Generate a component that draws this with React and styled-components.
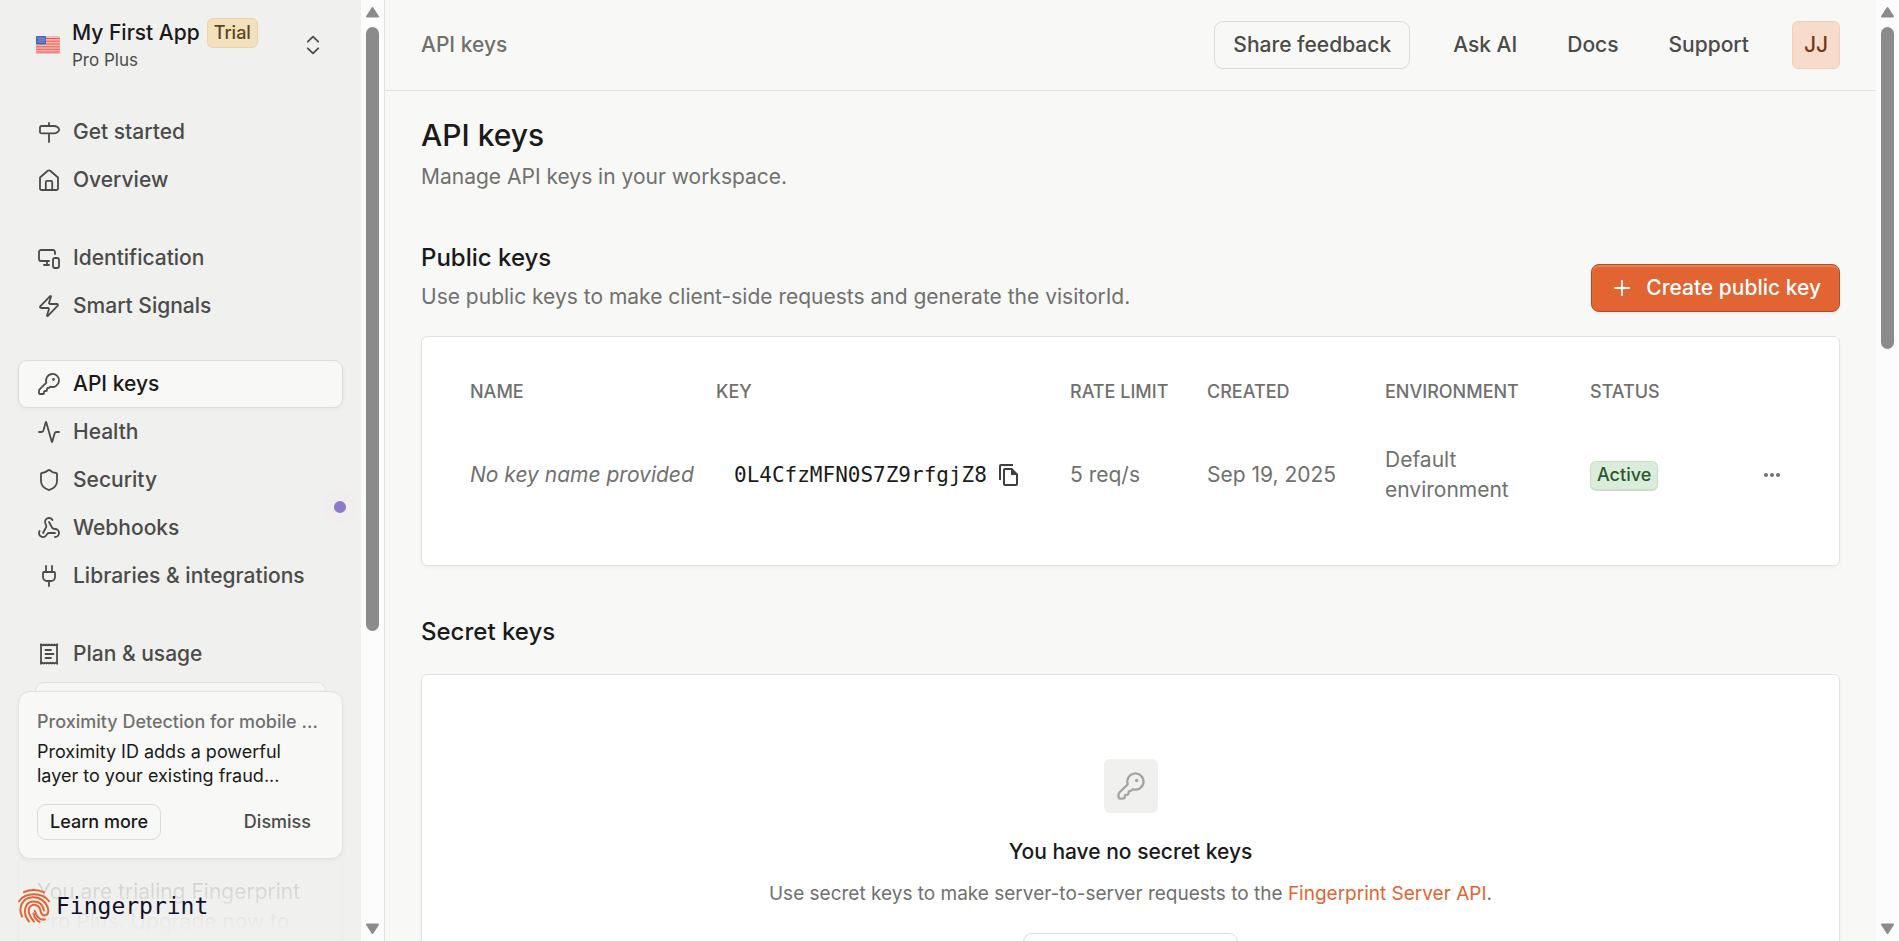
import React from "react";
import styled, { createGlobalStyle } from "styled-components";
import {
  MonitorSmartphone, Zap, KeyRound, Activity, Shield, Webhook, Plug, Plus,
} from "lucide-react";
import { MdOutlineFileCopy } from "react-icons/md";

const Global = createGlobalStyle`
  *, *::before, *::after { box-sizing: border-box; }
  body { margin: 0; background: #f8f8f6; color: #1a1a1a; font: 400 21px/30px Inter, "Liberation Sans", sans-serif; }
  h1, h2, h3, p { margin: 0; }
  button { font: inherit; color: inherit; cursor: pointer; }
  a { text-decoration: none; color: inherit; }
`;

const Shell = styled.div`
  display: flex;
  height: 100vh;
  overflow: hidden;
`;
const Sidebar = styled.aside`
  position: relative;
  flex: 0 0 361px;
  display: flex;
  flex-direction: column;
  background: #f0f0ef;
  overflow: hidden;
`;
const Track = styled.div`
  flex: 0 0 23px;
  display: flex;
  flex-direction: column;
  align-items: center;
  justify-content: space-between;
  padding: 6px 0;
  background: #fcfcfc;
`;
const Thumb = styled.div`
  width: 13px;
  flex: 0 0 ${(p) => p.$size};
  margin: 9px 0 auto;
  border-radius: 7px;
  background: #8b8b8b;
`;
const Arrow = ({ down }) => (
  <svg width="15" height="12" viewBox="0 0 15 12" aria-hidden="true">
    <path
      d={down ? "M2 1.500h11L7.500 10z" : "M2 10.500h11L7.500 2z"}
      fill="#8b8b8b" stroke="#8b8b8b" strokeWidth="2" strokeLinejoin="round"
    />
  </svg>
);
const Scrollbar = ({ size }) => (
  <Track aria-hidden="true">
    <Arrow />
    <Thumb $size={size} />
    <Arrow down />
  </Track>
);

const Switcher = styled.button`
  display: flex;
  align-items: center;
  gap: 12px;
  height: 90px;
  margin: 0 18px;
  padding: 0 18px;
  border: 0;
  background: none;
  text-align: left;
  svg:last-child { margin-left: auto; color: #4b4b4a; }
`;
const AppName = styled.span`
  display: flex;
  align-items: center;
  gap: 7px;
  font-weight: 500;
`;
const AppPlan = styled.span`
  display: block;
  font-size: 17px;
  line-height: 24px;
  color: #4b4b4a;
`;
const Badge = styled.span`
  display: inline-flex;
  align-items: center;
  height: 30px;
  padding: 0 6px;
  border-radius: 6px;
  font-size: 18px;
  font-weight: 500;
  border: 1px solid ${(p) => (p.$green ? "#c5e0c6" : "#efd3a3")};
  border-bottom-width: ${(p) => (p.$green ? "2px" : "1px")};
  background: ${(p) => (p.$green ? "#dcecdb" : "#f3e0bc")};
  color: ${(p) => (p.$green ? "#2b5730" : "#5b4420")};
`;
const Nav = styled.nav`
  display: flex;
  flex-direction: column;
  gap: 30px;
  padding: 18px 18px 0;
`;
const NavGroup = styled.div`
  display: flex;
  flex-direction: column;
`;
const NavLink = styled.a`
  display: flex;
  align-items: center;
  gap: 12px;
  height: 48px;
  padding: 0 18px;
  border: 1px solid ${(p) => (p.$active ? "#dcdcda" : "transparent")};
  border-radius: 9px;
  background: ${(p) => (p.$active ? "#f8f8f6" : "transparent")};
  box-shadow: ${(p) => (p.$active ? "0 2px 4px rgba(0,0,0,.04)" : "none")};
  color: ${(p) => (p.$active ? "#1a1a1a" : "#4b4b4a")};
  font-weight: 500;
  svg { color: #4b4b4a; flex: none; }
`;
const Beacon = styled.span`
  position: absolute;
  right: 4px;
  top: 490px;
  width: 34px;
  height: 34px;
  border: 11px solid #f1eeed;
  border-radius: 50%;
  background: #8b7bcb;
`;
const SideFooter = styled.div`
  position: absolute;
  inset: auto 0 0;
  padding: 0 18px;
  height: 259px;
`;
const CardPeek = styled.div`
  height: 9px;
  margin: 0 17px;
  border: 1px solid #e2e2e0;
  border-bottom: 0;
  border-radius: 9px 9px 0 0;
  background: #f6f6f4;
`;
const Promo = styled.section`
  padding: 18px;
  border: 1px solid #e2e2e0;
  border-radius: 12px;
  background: #f8f8f6;
  box-shadow: 0 2px 4px rgba(0,0,0,.05);
  font-size: 18px;
  line-height: 24px;
`;
const PromoTitle = styled.h3`
  font-size: 18px;
  font-weight: 500;
  line-height: 24px;
  margin-bottom: 6px;
  color: #70706f;
  white-space: nowrap;
  overflow: hidden;
  text-overflow: ellipsis;
`;
const PromoActions = styled.div`
  display: flex;
  justify-content: space-between;
  margin-top: 16px;
`;
const SmallButton = styled.button`
  height: 36px;
  padding: 0 12px;
  border: 1px solid ${(p) => (p.$plain ? "transparent" : "#dcdcda")};
  border-radius: 9px;
  background: none;
  font-size: 18px;
  font-weight: 500;
  line-height: 24px;
  color: ${(p) => (p.$plain ? "#4b4b4a" : "#1a1a1a")};
`;
const TrialNote = styled.p`
  height: 82px;
  padding: 18px 18px 0;
  border: 1px solid #ececea;
  border-width: 0 1px;
  white-space: nowrap;
  background: linear-gradient(#d2d2d1 24px, #f0f0ef 76px);
  background-clip: text;
  color: transparent;
`;
const Brand = styled.a`
  position: absolute;
  left: 17px;
  bottom: 17px;
  display: flex;
  align-items: center;
  gap: 5px;
  font: 400 23px/36px "DejaVu Sans Mono", monospace;
  color: #10102e;
`;

const Main = styled.main`
  flex: 1;
  min-width: 0;
  border-left: 1px solid #e2e2e0;
`;
const TopBar = styled.header`
  display: flex;
  align-items: center;
  justify-content: space-between;
  height: 91px;
  padding: 0 36px;
  border-bottom: 1px solid #e2e2e0;
  font-weight: 500;
`;
const Crumb = styled.span`
  color: #70706f;
`;
const TopActions = styled.div`
  display: flex;
  align-items: center;
  gap: 24px;
`;
const LinkGroup = styled.nav`
  display: flex;
  gap: 12px;
`;
const TopButton = styled.button`
  height: 48px;
  padding: 0 18px;
  border: 1px solid ${(p) => (p.$plain ? "transparent" : "#dcdcda")};
  border-radius: 9px;
  background: none;
  font-weight: 500;
  color: #4b4b4a;
`;
const Avatar = styled.button`
  width: 48px;
  height: 48px;
  padding: 0;
  border: 1px solid #f5cdb8;
  border-radius: 6px;
  background: #f8dccb;
  color: #73381f;
  font-weight: 500;
`;
const Content = styled.div`
  padding: 26px 36px 0;
`;
const PageTitle = styled.h1`
  font-size: 30px;
  font-weight: 500;
  line-height: 36px;
`;
const Lead = styled.p`
  margin-top: ${(p) => (p.$gap || "9px")};
  color: #70706f;
`;
const SectionHead = styled.div`
  display: flex;
  align-items: flex-end;
  justify-content: space-between;
  margin-top: 48px;
`;
const SectionTitle = styled.h2`
  font-size: 24px;
  font-weight: 500;
  line-height: 36px;
`;
const PrimaryButton = styled.button`
  display: flex;
  align-items: center;
  gap: 12px;
  height: 48px;
  padding: 0 18px;
  border: 1px solid #b84a20;
  border-radius: 8px;
  background: #e16432;
  box-shadow: inset 0 2px 1px rgba(255,255,255,.2), 0 2px 3px rgba(0,0,0,.06);
  color: #fff;
  font-weight: 500;
`;
const Panel = styled.section`
  margin-top: 24px;
  padding: ${(p) => (p.$empty ? "84px 48px" : "27px 48px 35px")};
  border: 1px solid #e2e2dd;
  border-radius: 6px;
  background: #fff;
  box-shadow: 0 2px 4px rgba(0,0,0,.03);
`;
const Table = styled.table`
  width: 100%;
  table-layout: fixed;
  border-collapse: collapse;
  color: #70706f;
`;
const Th = styled.th`
  width: ${(p) => p.$w};
  height: 56px;
  padding: 0;
  font-size: 18px;
  font-weight: 500;
  text-align: left;
  white-space: nowrap;
`;
const Td = styled.td`
  height: 110px;
  padding: ${(p) => (p.$wrap ? "12px 72px 12px 0" : "12px 0")};
  font-style: ${(p) => (p.$italic ? "italic" : "normal")};
  white-space: ${(p) => (p.$wrap ? "normal" : "nowrap")};
`;
const KeyCell = styled.div`
  display: flex;
  align-items: center;
  gap: 10px;
  padding-left: 18px;
`;
const KeyText = styled.code`
  font: 400 21px/30px "DejaVu Sans Mono", monospace;
  color: #1a1a1a;
`;
const IconButton = styled.button`
  display: flex;
  padding: 0;
  border: 0;
  background: none;
  color: #3f3f3f;
`;
const MenuButton = styled(IconButton)`
  margin-left: auto;
  padding: 0 10px;
  color: #70706f;
`;
const Empty = styled.div`
  display: flex;
  flex-direction: column;
  align-items: center;
`;
const EmptyIcon = styled.div`
  display: grid;
  place-items: center;
  width: 54px;
  height: 54px;
  border-radius: 6px;
  background: #f0f0ef;
  color: #a3a3a1;
`;
const EmptyTitle = styled.h3`
  margin-top: 24px;
  font-size: 21px;
  font-weight: 500;
  line-height: 30px;
`;
const EmptyText = styled.p`
  margin: 12px 0 24px;
  font-size: 19px;
  color: #70706f;
  a { color: #e16432; }
`;

const Stroke = ({ children, size = 24 }) => (
  <svg width={size} height={size} viewBox="0 0 24 24" fill="none" stroke="currentColor"
    strokeWidth="1.8" strokeLinecap="round" strokeLinejoin="round" aria-hidden="true">
    {children}
  </svg>
);
const Signpost = () => (
  <Stroke>
    <path d="M4.500 6h12.700c2 0 4.900 1.700 4.900 3.700s-2.900 3.700-4.900 3.700H4.500A1.500 1.500 0 0 1 3 11.900V7.500A1.500 1.500 0 0 1 4.500 6zM12 3v3M12 13.400V22" />
  </Stroke>
);
const Home = () => (
  <Stroke>
    <path d="M3 9.500 10.800 2.800a1.900 1.900 0 0 1 2.400 0L21 9.500v11a1.500 1.500 0 0 1-1.500 1.500h-15A1.500 1.500 0 0 1 3 20.500z" />
    <path d="M8.800 22v-8a1.200 1.200 0 0 1 1.200-1.200h4a1.200 1.200 0 0 1 1.200 1.200v8" />
  </Stroke>
);
const Receipt = () => (
  <Stroke>
    <path d="M4 2.500v19M20 2.500v19M8.500 8h5.500M8.500 12h8M8.500 16h5.500" />
    <path d="M4 2.500l1.300.8 1.400-.8 1.300.8 1.400-.8 1.300.8 1.300-.8 1.300.8 1.400-.8 1.300.8 1.300-.8 1.400.8 1.600-.8M4 21.500l1.300-.8 1.400.8 1.300-.8 1.400.8 1.300-.8 1.300.8 1.300-.8 1.400.8 1.300-.8 1.300.8 1.400-.8 1.600.8" />
  </Stroke>
);
const UpDown = () => (
  <Stroke><path d="m6.800 8.700 5.200-5 5.200 5M6.800 15.300l5.200 5 5.200-5" /></Stroke>
);
const Flag = () => (
  <svg width="24" height="18" viewBox="0 0 24 18" aria-hidden="true">
    <rect width="24" height="18" rx="1.500" fill="#f6b9b4" />
    <path d="M10 2.500h14M10 5.200h14M10 8h14M0 10.800h24M0 13.300h24M0 16h24" stroke="#ea5b4e" strokeWidth="1" />
    <rect width="10" height="8.500" rx="1" fill="#4560b9" />
    <path d="M1.500 2h8M2.500 4h7M1.500 6h8" stroke="#c9d2ee" strokeWidth="1" strokeDasharray="1 1" />
  </svg>
);
const Fingerprint = () => (
  <svg width="34" height="36" viewBox="0 0 34 36" fill="none" stroke="#e16432"
    strokeWidth="2" strokeLinecap="round" aria-hidden="true">
    <path d="M7 4.200C12.500 1.200 21 1 27 4.400" />
    <path d="M2 13.200C8 3.800 26 3.800 32 13.200" />
    <path d="M5 28.500C1 19.500 5 9.700 16 9.300c7.500-.2 13.200 4.600 15 11.200 1.100 4.200-.6 7-3.300 7-3.900 0-3.700-4-5-7.300-1.400-3.600-6.600-4.600-9.300-1.800-3.700 3.900-.6 10.600 3.600 15.200" />
    <path d="M12 33.500C5.500 25.500 7 14.300 16 13.500c5.800-.4 9.800 3.200 11 9" />
    <path d="M28 31.500c-6.500 1-8.800-3.500-10.200-8.800" />
    <path d="M22.500 33.800c-3.300-1.700-5-4.500-6-8.300" />
  </svg>
);

const NAV = [
  [["Get started", <Signpost />], ["Overview", <Home />]],
  [["Identification", <MonitorSmartphone strokeWidth={1.8} />], ["Smart Signals", <Zap strokeWidth={1.8} />]],
  [
    ["API keys", <KeyRound strokeWidth={1.8} />],
    ["Health", <Activity strokeWidth={1.8} />],
    ["Security", <Shield strokeWidth={1.8} />],
    ["Webhooks", <Webhook strokeWidth={1.8} />],
    ["Libraries & integrations", <Plug strokeWidth={1.8} />],
  ],
  [["Plan & usage", <Receipt />]],
];

export default function App() {
  return (
    <>
      <Global />
      <Shell>
        <Sidebar>
          <Switcher>
            <Flag />
            <span>
              <AppName>My First App <Badge>Trial</Badge></AppName>
              <AppPlan>Pro Plus</AppPlan>
            </span>
            <UpDown />
          </Switcher>
          <Nav aria-label="Workspace">
            {NAV.map((group, i) => (
              <NavGroup key={i}>
                {group.map(([label, icon]) => (
                  <NavLink key={label} href="#" $active={label === "API keys"}>
                    {icon}{label}
                  </NavLink>
                ))}
              </NavGroup>
            ))}
          </Nav>
          <Beacon />
          <SideFooter>
            <CardPeek />
            <Promo>
              <PromoTitle>Proximity Detection for mobile devices</PromoTitle>
              <p>Proximity ID adds a powerful layer to your existing fraud...</p>
              <PromoActions>
                <SmallButton>Learn more</SmallButton>
                <SmallButton $plain>Dismiss</SmallButton>
              </PromoActions>
            </Promo>
            <TrialNote>You are trialing Fingerprint<br />Pro Plus. Upgrade now to</TrialNote>
            <Brand href="#"><Fingerprint />Fingerprint</Brand>
          </SideFooter>
        </Sidebar>
        <Scrollbar size="65%" />
        <Main>
          <TopBar>
            <Crumb>API keys</Crumb>
            <TopActions>
              <TopButton>Share feedback</TopButton>
              <LinkGroup aria-label="Help">
                <TopButton $plain>Ask AI</TopButton>
                <TopButton $plain>Docs</TopButton>
                <TopButton $plain>Support</TopButton>
              </LinkGroup>
              <Avatar>JJ</Avatar>
            </TopActions>
          </TopBar>
          <Content>
            <PageTitle>API keys</PageTitle>
            <Lead>Manage API keys in your workspace.</Lead>
            <SectionHead>
              <div>
                <SectionTitle>Public keys</SectionTitle>
                <Lead $gap="6px">Use public keys to make client-side requests and generate the visitorId.</Lead>
              </div>
              <PrimaryButton><Plus size={24} strokeWidth={1.8} />Create public key</PrimaryButton>
            </SectionHead>
            <Panel>
              <Table>
                <thead>
                  <tr>
                    <Th $w="246px">NAME</Th>
                    <Th $w="354px">KEY</Th>
                    <Th $w="137px">RATE LIMIT</Th>
                    <Th $w="178px">CREATED</Th>
                    <Th $w="205px">ENVIRONMENT</Th>
                    <Th>STATUS</Th>
                    <Th $w="60px" aria-label="Actions" />
                  </tr>
                </thead>
                <tbody>
                  <tr>
                    <Td $italic>No key name provided</Td>
                    <Td>
                      <KeyCell>
                        <KeyText>0L4CfzMFN0S7Z9rfgjZ8</KeyText>
                        <IconButton aria-label="Copy key"><MdOutlineFileCopy size={24} /></IconButton>
                      </KeyCell>
                    </Td>
                    <Td>5 req/s</Td>
                    <Td>Sep 19, 2025</Td>
                    <Td $wrap>Default environment</Td>
                    <Td><Badge $green>Active</Badge></Td>
                    <Td>
                      <MenuButton aria-label="More actions">
                        <svg width="18" height="6" viewBox="0 0 18 6" fill="currentColor" aria-hidden="true">
                          <circle cx="3" cy="3" r="2" /><circle cx="9" cy="3" r="2" /><circle cx="15" cy="3" r="2" />
                        </svg>
                      </MenuButton>
                    </Td>
                  </tr>
                </tbody>
              </Table>
            </Panel>
            <SectionHead><SectionTitle>Secret keys</SectionTitle></SectionHead>
            <Panel $empty>
              <Empty>
                <EmptyIcon><KeyRound size={30} strokeWidth={1.8} /></EmptyIcon>
                <EmptyTitle>You have no secret keys</EmptyTitle>
                <EmptyText>
                  Use secret keys to make server-to-server requests to the <a href="#">Fingerprint Server API</a>.
                </EmptyText>
                <TopButton>Create secret key</TopButton>
              </Empty>
            </Panel>
          </Content>
        </Main>
        <Scrollbar size="322px" />
      </Shell>
    </>
  );
}
